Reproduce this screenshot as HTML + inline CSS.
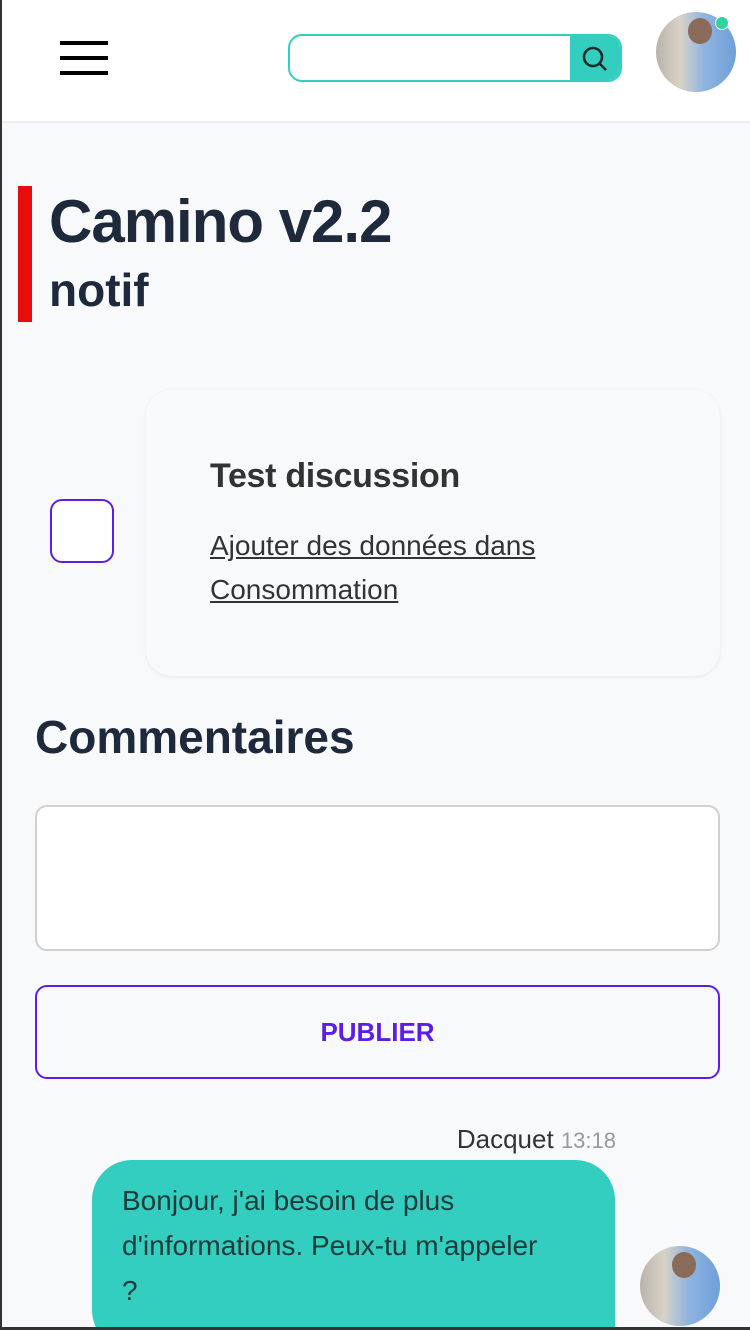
<!DOCTYPE html>
<html><head><meta charset="utf-8"><style>
*{box-sizing:border-box;margin:0;padding:0}
html,body{width:750px;height:1330px;overflow:hidden}
body{background:#f8f9fb;font-family:"Liberation Sans",Arial,sans-serif;position:relative}
.hdr{position:absolute;left:0;top:0;width:750px;height:123px;background:#fff;border-bottom:2px solid #eceef1}
.bar{position:absolute;left:60px;width:48px;height:4px;background:#000}
.search{position:absolute;left:288px;top:34px;width:334px;height:48px;border:2px solid #33cec0;border-radius:14px;background:#fff;overflow:hidden}
.search .btn{position:absolute;right:0;top:0;width:50px;height:100%;background:#33cec0}
.av{position:absolute;border-radius:50%;background:linear-gradient(90deg,#b9b4ab 0%,#d8d2c6 30%,#8fb4e0 60%,#6f9fd8 100%);overflow:hidden}
.av::after{content:"";position:absolute;left:40%;top:8%;width:30%;height:32%;border-radius:50%;background:#8a6a58}
.dot{position:absolute;left:715px;top:16px;width:14px;height:14px;border-radius:50%;background:#2ed3a0;border:1px solid #fff}
.red{position:absolute;left:18px;top:186px;width:14px;height:136px;background:#e80c0c}
h1{position:absolute;left:49px;top:186px;font-size:60px;font-weight:bold;color:#1e293b;line-height:72px;letter-spacing:-1px}
.sub{position:absolute;left:49px;top:262px;font-size:46px;font-weight:bold;color:#1e293b;line-height:56px}
.card{position:absolute;left:146px;top:390px;width:574px;height:286px;border-radius:26px;background:#f8f9fb;box-shadow:0 1px 4px rgba(0,0,0,.07)}
.chk{position:absolute;left:50px;top:499px;width:64px;height:64px;border:2px solid #5b1ee8;border-radius:12px;background:#fff}
.ct{position:absolute;left:210px;top:457px;font-size:34px;font-weight:bold;color:#333;letter-spacing:-0.3px}
.cl{position:absolute;left:210px;top:524px;font-size:28px;line-height:44px;color:#333;text-decoration:underline}
h2{position:absolute;left:35px;top:710px;font-size:46px;font-weight:bold;color:#1e293b}
.ta{position:absolute;left:35px;top:805px;width:685px;height:146px;border:2px solid #d0d0d0;border-radius:12px;background:#fff}
.pub{position:absolute;left:35px;top:985px;width:685px;height:94px;border:2px solid #5b1ee8;border-radius:12px;text-align:center;line-height:90px;font-size:26px;font-weight:bold;color:#5b1ee8}
.meta{position:absolute;right:134px;top:1124px;font-size:26px;color:#333}
.meta span{color:#999;font-size:22px}
.bub{position:absolute;left:92px;top:1160px;width:523px;height:190px;background:#33cec0;border-radius:40px 40px 0 40px;padding:18px 30px;font-size:28px;line-height:45px;color:#1d3b3a}
</style></head><body>
<div class="hdr">
<div class="bar" style="top:41px"></div><div class="bar" style="top:56px"></div><div class="bar" style="top:71px"></div>
<div class="search"><div class="btn"><svg width="50" height="46" viewBox="0 0 50 46"><circle cx="23" cy="21" r="9" fill="none" stroke="#1a2a2a" stroke-width="2.6"/><line x1="29.5" y1="27.5" x2="36" y2="34" stroke="#1a2a2a" stroke-width="2.6"/></svg></div></div>
<div class="av" style="left:656px;top:12px;width:80px;height:80px"></div>
<div class="dot"></div>
</div>
<div class="red"></div>
<h1>Camino v2.2</h1>
<div class="sub">notif</div>
<div class="card"></div>
<div class="chk"></div>
<div class="ct">Test discussion</div>
<div class="cl">Ajouter des données dans<br>Consommation</div>
<h2>Commentaires</h2>
<div class="ta"></div>
<div class="pub">PUBLIER</div>
<div class="meta">Dacquet <span>13:18</span></div>
<div class="bub">Bonjour, j'ai besoin de plus<br>d'informations. Peux-tu m'appeler<br>?</div>
<div class="av" style="left:640px;top:1246px;width:80px;height:80px"></div>
<div style="position:absolute;left:0;top:0;width:2px;height:1330px;background:#333"></div>
<div style="position:absolute;left:0;top:1327px;width:750px;height:3px;background:#333"></div>
</body></html>
